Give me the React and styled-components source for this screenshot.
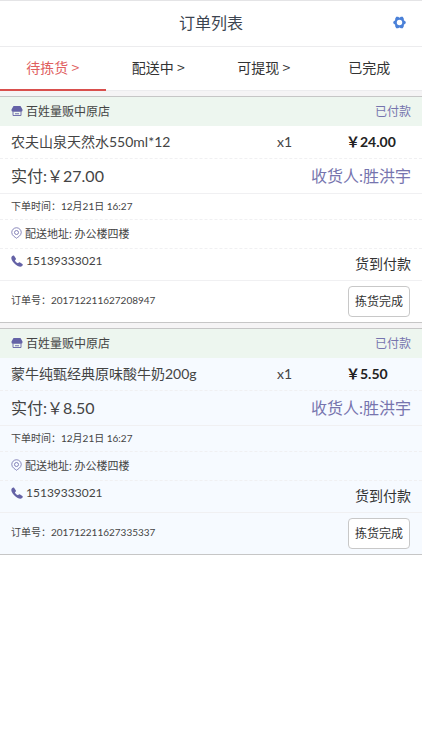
import React from "react";
import styled, { createGlobalStyle } from "styled-components";

const Global = createGlobalStyle`
  * { box-sizing: border-box; }
  body {
    margin: 0;
    background: #fff;
    color: #444;
    font-family: Lato, "Noto Sans CJK SC", sans-serif;
  }
`;

const TopBar = styled.header`
  display: grid;
  grid-template-columns: 1fr auto 1fr;
  align-items: center;
  height: 47px;
  padding: 0 16px 2px;
  border-top: 1px solid #e4e4e6;
  border-bottom: 1px solid #ececee;
`;

const Title = styled.h1`
  grid-column: 2;
  margin: 0;
  font-size: 16px;
  font-weight: 400;
  line-height: 24px;
  color: #3c4450;
`;

const IconButton = styled.button`
  justify-self: end;
  display: flex;
  padding: 0;
  border: 0;
  background: none;
  color: #4a80d8;
  cursor: pointer;
`;

const Tabs = styled.nav`
  display: grid;
  grid-template-columns: repeat(4, 1fr);
  height: 44px;
  border-bottom: 1px solid #ececee;
`;

const Tab = styled.a`
  display: flex;
  align-items: center;
  justify-content: center;
  height: 44px;
  padding-bottom: 2px;
  font-family: "Noto Sans CJK SC", sans-serif;
  font-size: 14px;
  text-decoration: none;
  white-space: pre;
  color: ${(p) => (p.$active ? "#e06060" : "#333")};
  border-bottom: 2px solid ${(p) => (p.$active ? "#d94f4d" : "transparent")};
`;

const Orders = styled.main`
  display: flex;
  flex-direction: column;
  gap: 5px;
  padding-top: 5px;
  background: #f5f4f5;
`;

const Card = styled.article`
  border-top: 1px solid #c6c6c6;
  border-bottom: 1px solid #c6c6c6;
  background: ${(p) => (p.$tinted ? "#f6faff" : "#fff")};
`;

const Row = styled.div`
  display: flex;
  align-items: center;
  justify-content: space-between;
  min-height: ${(p) => p.$height}px;
  padding: 0 11px 2px;
  font-size: ${(p) => p.$size}px;
  border-bottom: ${(p) => (p.$line ? `1px ${p.$line} #f0f0f2` : "0")};
`;

const ShopRow = styled(Row)`
  background: #edf6ef;
`;

const ProductRow = styled(Row)`
  display: grid;
  grid-template-columns: 1fr 69px 65px;
`;

const PhoneRow = styled(Row)`
  align-items: flex-start;
  padding-top: 4px;
`;

const OrderRow = styled(Row)`
  align-items: flex-start;
  padding-top: 5px;
`;

const IconText = styled.span`
  display: flex;
  align-items: center;
  gap: ${(p) => p.$gap}px;

  svg { flex: none; color: #6462a6; }
`;

const Accent = styled.span`
  color: #7674ae;
`;

const Price = styled.strong`
  color: #222;
  font-weight: 700;
`;

const PayMethod = styled.span`
  font-size: 14px;
  line-height: 22px;
  color: #333;
`;

const OrderNumber = styled.span`
  line-height: 28px;
`;

const PickButton = styled.button`
  height: 31px;
  padding: 0 6px 2px;
  margin-right: 1px;
  border: 1px solid #c8c8c8;
  border-radius: 4px;
  background: #fff;
  color: #333;
  font: inherit;
  font-size: 12px;
  cursor: pointer;
`;

function GearIcon() {
  return (
    <svg width="13" height="13" viewBox="0 0 24 24" aria-hidden="true">
      <path
        fill="currentColor"
        fillRule="evenodd"
        d="M6 1.5h3.5L12 3l2.500-1.500H18L20 5v3l3.500 2.500v3L20 16v3l-2 3.500h-3.500L12 21l-2.500 1.500H6L4 19v-3L.5 13.500v-3L4 8V5zM12 7a5 5 0 1 0 0 10 5 5 0 0 0 0-10z"
      />
    </svg>
  );
}

function ShopIcon() {
  return (
    <svg width="12" height="12" viewBox="0 0 24 24" aria-hidden="true">
      <path fill="currentColor" d="M5 2h14l4 7v2a3 3 0 0 1-3 2.500H4A3 3 0 0 1 1 11V9z" />
      <path fill="none" stroke="currentColor" strokeWidth="1.800" d="M4 13v8h16v-8M8 17.500h8" />
    </svg>
  );
}

function PinIcon() {
  return (
    <svg width="11" height="12" viewBox="0 0 22 24" aria-hidden="true">
      <g fill="none" stroke="currentColor" strokeWidth="1.500">
        <path d="M11 22.500c-2-2-9.500-5-9.500-11.500a9.500 9.500 0 0 1 19 0c0 6.500-7.500 9.500-9.500 11.500z" />
        <circle cx="11" cy="11" r="4" />
      </g>
    </svg>
  );
}

function PhoneIcon() {
  return (
    <svg width="12" height="12" viewBox="0 0 24 24" aria-hidden="true">
      <path
        fill="currentColor"
        d="M2 2.500C3.500 1 5.500.5 6.500 2l3 4.500c.8 1.300.3 2.500-.8 3.300-.9.700-.9 1.200-.4 2 1.200 1.900 2.700 3.300 4.600 4.400.8.500 1.300.4 2-.5.900-1.100 2-1.500 3.300-.7l4.500 3c1.400 1 .9 2.800-.6 4.200-2 1.900-5 1.700-8.600-.2C8 19 4 14.500 1.700 10 .3 7 .2 4.300 2 2.500z"
      />
    </svg>
  );
}

const tabs = ["待拣货 >", "配送中 >", "可提现 >", "已完成"];

const orders = [
  {
    id: "201712211627208947",
    product: "农夫山泉天然水550ml*12",
    price: "24.00",
    paid: "27.00",
  },
  {
    id: "201712211627335337",
    product: "蒙牛纯甄经典原味酸牛奶200g",
    price: "5.50",
    paid: "8.50",
    tinted: true,
  },
];

function Order({ order }) {
  return (
    <Card $tinted={order.tinted}>
      <ShopRow $height={29} $size={12}>
        <IconText $gap={3}>
          <ShopIcon />
          百姓量贩中原店
        </IconText>
        <Accent>已付款</Accent>
      </ShopRow>
      <ProductRow $height={33} $size={14} $line="dashed">
        <span>{order.product}</span>
        <span>x1</span>
        <Price>￥{order.price}</Price>
      </ProductRow>
      <Row $height={35} $size={16} $line="solid">
        <span>实付:￥{order.paid}</span>
        <Accent>收货人:胜洪宇</Accent>
      </Row>
      <Row $height={26} $size={10} $line="dashed">
        <span>下单时间：12月21日 16:27</span>
      </Row>
      <Row $height={29} $size={11} $line="dashed">
        <IconText $gap={3}>
          <PinIcon />
          配送地址: 办公楼四楼
        </IconText>
      </Row>
      <PhoneRow $height={32} $size={12} $line="solid">
        <IconText $gap={3}>
          <PhoneIcon />
          15139333021
        </IconText>
        <PayMethod>货到付款</PayMethod>
      </PhoneRow>
      <OrderRow $height={41} $size={10}>
        <OrderNumber>订单号：{order.id}</OrderNumber>
        <PickButton type="button">拣货完成</PickButton>
      </OrderRow>
    </Card>
  );
}

export default function App() {
  return (
    <>
      <Global />
      <TopBar>
        <Title>订单列表</Title>
        <IconButton type="button" aria-label="设置">
          <GearIcon />
        </IconButton>
      </TopBar>
      <Tabs>
        {tabs.map((label, i) => (
          <Tab key={label} href="#" $active={i === 0}>
            {label}
          </Tab>
        ))}
      </Tabs>
      <Orders>
        {orders.map((order) => (
          <Order key={order.id} order={order} />
        ))}
      </Orders>
    </>
  );
}
